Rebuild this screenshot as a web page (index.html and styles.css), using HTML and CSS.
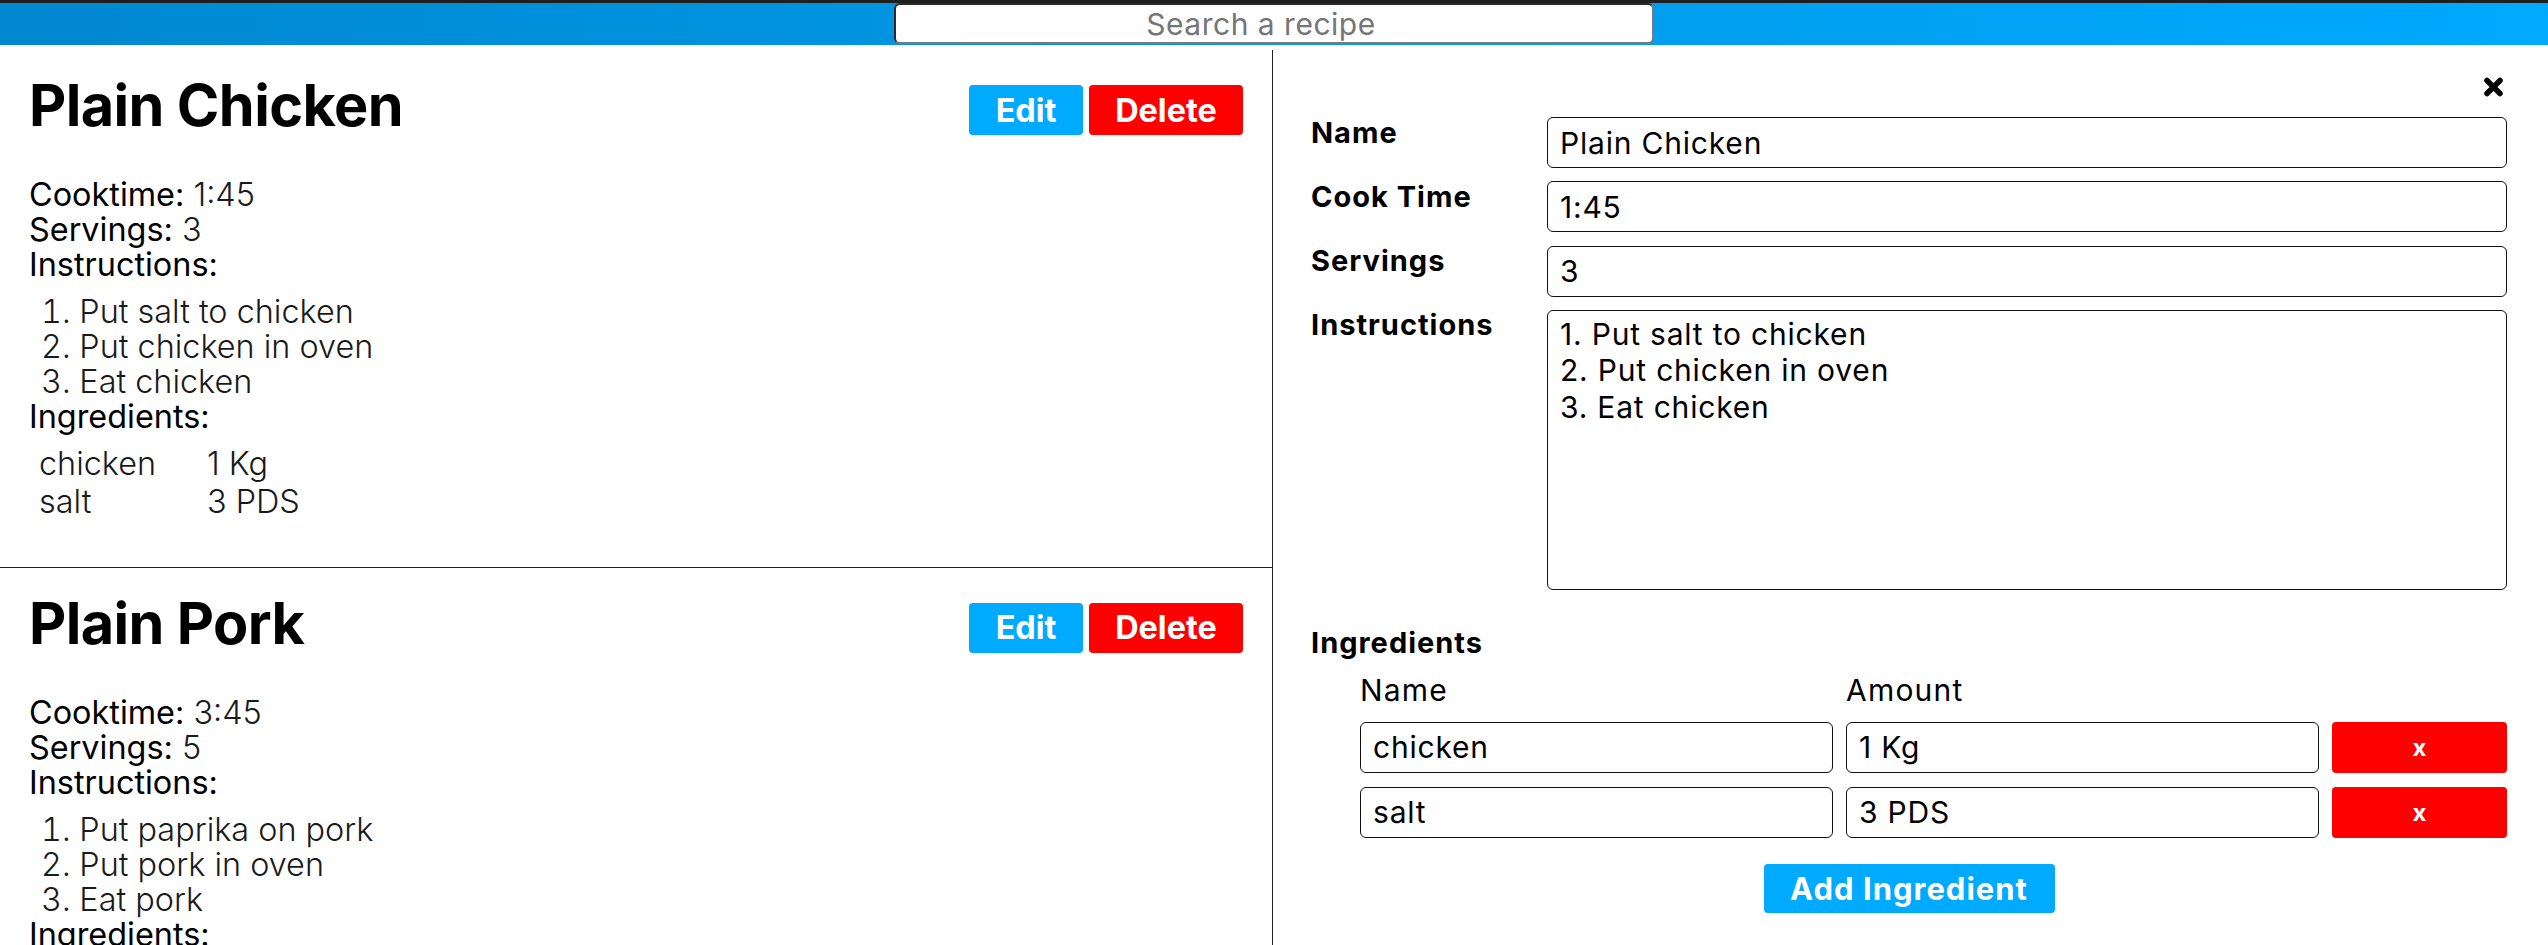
FILE: index.html
```html
<!DOCTYPE html>
<html lang="en">
<head>
<meta charset="utf-8">
<title>Recipes</title>
<link rel="stylesheet" href="styles.css">
</head>
<body>
<header class="topbar">
  <input class="search" type="text" placeholder="Search a recipe">
</header>
<main class="layout">
  <section class="recipe-list">
    <article class="recipe">
      <div class="recipe-head">
        <h1 class="recipe-title">Plain Chicken</h1>
        <div class="recipe-actions">
          <button class="btn btn-edit">Edit</button>
          <button class="btn btn-delete">Delete</button>
        </div>
      </div>
      <div class="recipe-body">
        <div class="line">Cooktime: <span class="val">1:45</span></div>
        <div class="line">Servings: <span class="val">3</span></div>
        <div class="line">Instructions:</div>
        <ol class="steps">
          <li>Put salt to chicken</li>
          <li>Put chicken in oven</li>
          <li>Eat chicken</li>
        </ol>
        <div class="line">Ingredients:</div>
        <table class="ing-table">
          <tr><td>chicken</td><td>1 Kg</td></tr>
          <tr><td>salt</td><td>3 PDS</td></tr>
        </table>
      </div>
    </article>
    <article class="recipe">
      <div class="recipe-head">
        <h1 class="recipe-title">Plain Pork</h1>
        <div class="recipe-actions">
          <button class="btn btn-edit">Edit</button>
          <button class="btn btn-delete">Delete</button>
        </div>
      </div>
      <div class="recipe-body">
        <div class="line">Cooktime: <span class="val">3:45</span></div>
        <div class="line">Servings: <span class="val">5</span></div>
        <div class="line">Instructions:</div>
        <ol class="steps">
          <li>Put paprika on pork</li>
          <li>Put pork in oven</li>
          <li>Eat pork</li>
        </ol>
        <div class="line">Ingredients:</div>
      </div>
    </article>
  </section>
  <section class="editor">
    <div class="editor-close">
      <svg viewBox="0 0 21 20" aria-label="Close"><path d="M4 3.5 L17 16.5 M17 3.5 L4 16.5" stroke="#000" stroke-width="5.5" stroke-linecap="round" fill="none"/></svg>
    </div>
    <form class="editor-form">
      <div class="field-grid">
        <label class="field-label">Name</label>
        <input class="field-input" type="text" value="Plain Chicken">
        <label class="field-label">Cook Time</label>
        <input class="field-input" type="text" value="1:45">
        <label class="field-label">Servings</label>
        <input class="field-input" type="text" value="3">
        <label class="field-label">Instructions</label>
        <textarea class="field-input field-textarea">1. Put salt to chicken
2. Put chicken in oven
3. Eat chicken</textarea>
      </div>
      <div class="ing-section">
        <div class="field-label">Ingredients</div>
        <div class="ing-grid">
          <div class="ing-col-head">Name</div>
          <div class="ing-col-head">Amount</div>
          <div></div>
          <input class="field-input" type="text" value="chicken">
          <input class="field-input" type="text" value="1 Kg">
          <button type="button" class="btn btn-remove">x</button>
          <input class="field-input" type="text" value="salt">
          <input class="field-input" type="text" value="3 PDS">
          <button type="button" class="btn btn-remove">x</button>
        </div>
        <div class="add-row">
          <button type="button" class="btn btn-add">Add Ingredient</button>
        </div>
      </div>
    </form>
  </section>
</main>
</body>
</html>
```
FILE: styles.css
```css
* { box-sizing: border-box; }
html, body { margin: 0; padding: 0; }
body {
  font-family: Inter, "Open Sans", sans-serif;
  color: #000;
  background: #fff;
  width: 2548px;
  height: 945px;
  overflow: hidden;
}

.topbar {
  height: 45px;
  border-top: 3px solid #1f1f1f;
  background: linear-gradient(to right, #0088d1, #00aaff);
  display: flex;
  justify-content: center;
  align-items: flex-start;
}
.search {
  width: 760px;
  height: 41px;
  margin: 0;
  border: 2px solid;
  border-color: #2a2a2a #7a7a7a #7a7a7a #2a2a2a;
  border-radius: 6px;
  background: #fff;
  font-family: inherit;
  font-size: 30px;
  letter-spacing: 0.5px;
  text-align: center;
  padding: 0 30px 0 4px;
  outline: none;
}
.search::placeholder { color: #757575; }

.layout {
  display: grid;
  grid-template-columns: 1273px 1fr;
  margin-top: 5px;
  height: 895px;
}

.recipe-list {
  border-right: 1px solid #222;
  overflow: hidden;
}
.recipe {
  padding: 35px 29px 46px;
  border-bottom: 1px solid #222;
}
.recipe-head {
  display: flex;
  justify-content: space-between;
  align-items: flex-start;
}
.recipe-title {
  margin: 0;
  font-size: 57.6px;
  letter-spacing: -0.6px;
  line-height: 40px;
  font-weight: 700;
}
.recipe-actions { display: flex; gap: 6px; }

.btn {
  border: 0;
  border-radius: 4px;
  color: #fff;
  font-family: inherit;
  font-weight: 700;
  padding: 0;
  cursor: pointer;
}
.btn-edit { background: #00aaff; width: 114px; height: 50px; font-size: 32.4px; }
.btn-delete { background: #ff0000; width: 154px; height: 50px; font-size: 32.4px; }

.recipe-body {
  margin-top: 42px;
  font-size: 32.4px;
  line-height: 35px;
}
.val { font-weight: 300; color: #1a1a1a; }
.steps {
  margin: 12px 0 0;
  padding: 0 0 0 12px;
  list-style-position: inside;
  font-weight: 300;
  color: #1a1a1a;
}
.ing-table {
  margin: 10.5px 0 0 10px;
  border-collapse: collapse;
  font-weight: 300;
  color: #1a1a1a;
}
.ing-table td { padding: 1.5px 0; }
.ing-table td:first-child { width: 168px; }

.editor { padding: 27px 41px 0 38px; }
.editor-close {
  display: flex;
  justify-content: flex-end;
  padding-right: 3px;
  height: 20px;
}
.editor-close svg { width: 21px; height: 20px; display: block; }

.field-grid {
  margin-top: 20px;
  display: grid;
  grid-template-columns: 236px 1fr;
  row-gap: 13.3px;
}
.field-label {
  font-size: 29px;
  letter-spacing: 1px;
  font-weight: 700;
  line-height: 30px;
  padding-top: 0.5px;
}
.field-input {
  display: block;
  width: 100%;
  height: 51px;
  margin: 0;
  border: 1px solid #111;
  border-radius: 6px;
  background: #fff;
  color: #000;
  font-family: inherit;
  font-size: 30px;
  letter-spacing: 0.8px;
  padding: 0 12px;
  outline: none;
}
.field-textarea {
  height: 280px;
  line-height: 36.5px;
  padding: 5px 12px;
  resize: none;
  overflow: hidden;
}

.ing-section { margin-top: 37.5px; }
.ing-grid {
  margin: 14px 0 0 49px;
  display: grid;
  grid-template-columns: 1fr 1fr 175px;
  column-gap: 13.5px;
  row-gap: 14px;
}
.ing-col-head { font-size: 30px; letter-spacing: 1.2px; line-height: 36px; }
.btn-remove { background: #ff0000; height: 51px; font-size: 24px; }
.add-row {
  display: flex;
  justify-content: center;
  margin-top: 26px;
}
.btn-add { background: #00aaff; width: 291px; height: 49px; font-size: 31px; letter-spacing: 1px; }
```
